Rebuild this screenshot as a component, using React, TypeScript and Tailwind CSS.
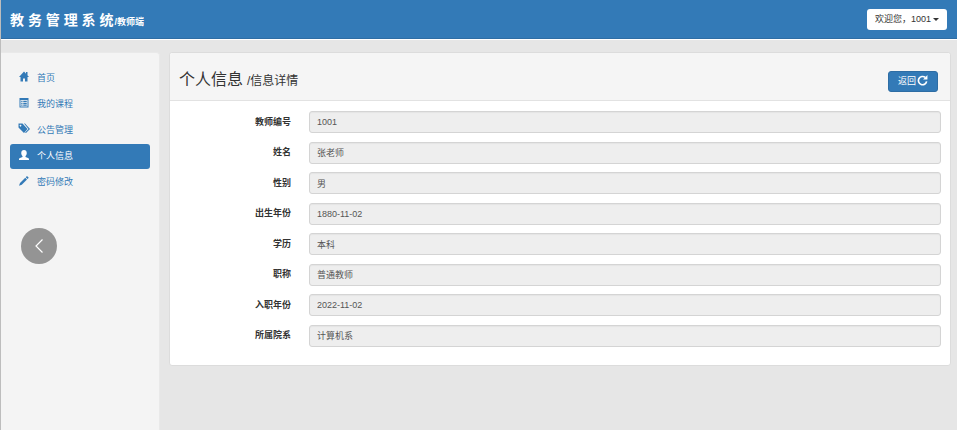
import type { ReactNode } from 'react';

const fields = [
  { id: 'number', label: '教师编号', value: '1001' },
  { id: 'name', label: '姓名', value: '张老师' },
  { id: 'gender', label: '性别', value: '男' },
  { id: 'birth', label: '出生年份', value: '1880-11-02' },
  { id: 'education', label: '学历', value: '本科' },
  { id: 'title', label: '职称', value: '普通教师' },
  { id: 'joined', label: '入职年份', value: '2022-11-02' },
  { id: 'department', label: '所属院系', value: '计算机系' },
];

function Glyph({ children }: { children: ReactNode }) {
  return (
    <svg viewBox="0 0 20 20" className="mb-[3px] h-[10px] w-[10px] shrink-0 overflow-visible" fill="currentColor" aria-hidden="true">
      {children}
    </svg>
  );
}

const menu = [
  {
    text: '首页',
    icon: <path d="M10-1 20 10h-3v9h-5v-6H8v6H3v-9H0L10-1ZM14 0h3v7l-3-3Z" />,
  },
  {
    text: '我的课程',
    icon: (
      <path
        fillRule="evenodd"
        d="M1 0h18v19H1ZM3 4v13h14V4ZM4.500 5.500h2.500v2.500h-2.500ZM8.500 5.500h7v2.500h-7ZM4.500 9.300h2.500v2.500h-2.500ZM8.500 9.300h7v2.500h-7ZM4.500 13h2.500v2.500h-2.500ZM8.500 13h7v2.500h-7Z"
      />
    ),
  },
  {
    text: '公告管理',
    icon: (
      <>
        <path fillRule="evenodd" d="M-1-1h8l10 11-7 8L-1 7ZM3 1.500a1.700 1.700 0 1 0 .01 0Z" />
        <path d="M10-1h2l10 11-8 8-2-1 7-7Z" />
      </>
    ),
  },
  {
    text: '个人信息',
    active: true,
    icon: (
      <path d="M10 0c3.500 0 5.500 2.500 5.500 6 0 2.500-1 4.500-2.500 6v2l5 2c1.500.6 2 1.500 2 3v1H0v-1c0-1.500.5-2.400 2-3l5-2v-2c-1.500-1.500-2.500-3.500-2.500-6C4.500 2.500 6.500 0 10 0Z" />
    ),
  },
  {
    text: '密码修改',
    icon: <path d="m16 0 3.500 3.500-2.500 2.500-3.500-3.500ZM12.500 3.500 16 7 5.500 17.500 0 19.500 2 14Z" />,
  },
];

export default function App() {
  return (
    <div className="flex min-h-screen flex-col border-l border-[#bdbdbd] bg-[#e6e6e6] font-['Liberation_Sans','Noto_Sans_CJK_SC',sans-serif] text-[9px] leading-[13px] text-[#333]">
      <header className="flex h-10 items-center justify-between border-b border-white bg-[#337ab7] pr-[10px] pl-[9px] shadow-[inset_0_-1px_0_#2e6da4]">
        <h1 className="flex items-baseline gap-px font-bold text-white">
          <span className="text-[14px] leading-5">教 务 管 理 系 统</span>
          <small className="text-[9px]">/教师端</small>
        </h1>
        <button type="button" className="flex h-[21px] items-center gap-[2px] rounded-[3px] bg-white px-2">
          欢迎您，1001
          <svg viewBox="0 0 6 3" className="h-[3px] w-[6px]" fill="currentColor" aria-hidden="true">
            <path d="M0 0h6L3 3Z" />
          </svg>
        </button>
      </header>

      <div className="flex grow pt-3">
        <nav className="w-[159px] shrink-0 rounded-tr-sm border-t border-r border-[#e9e9e9] bg-[#f4f4f4] px-[9px] pt-[13px]">
          <ul className="flex flex-col gap-px">
            {menu.map((item) => (
              <li key={item.text}>
                <a
                  href="#"
                  aria-current={item.active ? 'page' : undefined}
                  className={
                    item.active
                      ? 'flex h-[25px] items-center gap-2 rounded-[3px] bg-[#337ab7] pl-[9px] text-white'
                      : 'flex h-[25px] items-center gap-2 rounded-[3px] pl-[9px] text-[#337ab7]'
                  }
                >
                  <Glyph>{item.icon}</Glyph>
                  {item.text}
                </a>
              </li>
            ))}
          </ul>
        </nav>

        <main className="min-w-0 grow pr-[6px] pl-[9px]">
          <section className="rounded-[3px] border border-[#dcdcdc] bg-white">
            <div className="flex h-12 items-center justify-between rounded-t-[3px] border-b border-[#e2e2e2] bg-[#f5f5f5] pr-3 pl-[9px]">
              <h2 className="flex items-baseline gap-1 pt-[6px]">
                <span className="text-[16px] leading-5">个人信息</span>
                <small className="text-[12px]">/信息详情</small>
              </h2>
              <button
                type="button"
                className="mt-[10px] flex h-[21px] items-center gap-px rounded-[3px] border border-[#2e6da4] bg-[#337ab7] px-[9px] text-white"
              >
                返回
                <svg viewBox="0 0 20 20" className="mb-[2px] h-[11px] w-[11px]" fill="none" aria-hidden="true">
                  <path d="M15 4.500A7.500 7.500 0 1 0 17.500 11.500" stroke="currentColor" strokeWidth="3" />
                  <path d="M19 0v8h-8Z" fill="currentColor" />
                </svg>
              </button>
            </div>

            <form className="grid min-h-[264px] content-between pt-[10px] pb-[18px]">
              {fields.map((field) => (
                <div key={field.id} className="grid grid-cols-[minmax(0,1fr)_minmax(0,5fr)] items-center">
                  <label htmlFor={field.id} className="pr-[9px] text-right font-bold">
                    {field.label}
                  </label>
                  <div className="px-[9px]">
                    <input
                      id={field.id}
                      readOnly
                      value={field.value}
                      className="block h-[22px] w-full rounded-[3px] border border-[#d4d4d4] bg-[#eee] px-[7px] text-[#555] shadow-[inset_0_1px_1px_#0000000a] outline-none"
                    />
                  </div>
                </div>
              ))}
            </form>
          </section>
        </main>
      </div>

      <button
        type="button"
        aria-label="后退"
        className="fixed top-[228px] left-[21px] flex h-9 w-9 items-center justify-center rounded-full bg-[#949494] text-white"
      >
        <svg viewBox="0 0 8 14" className="h-[14px] w-2" fill="none" stroke="currentColor" strokeWidth="1.2" aria-hidden="true">
          <path d="M7.500 .5 1 7l6.500 6.500" />
        </svg>
      </button>
    </div>
  );
}
